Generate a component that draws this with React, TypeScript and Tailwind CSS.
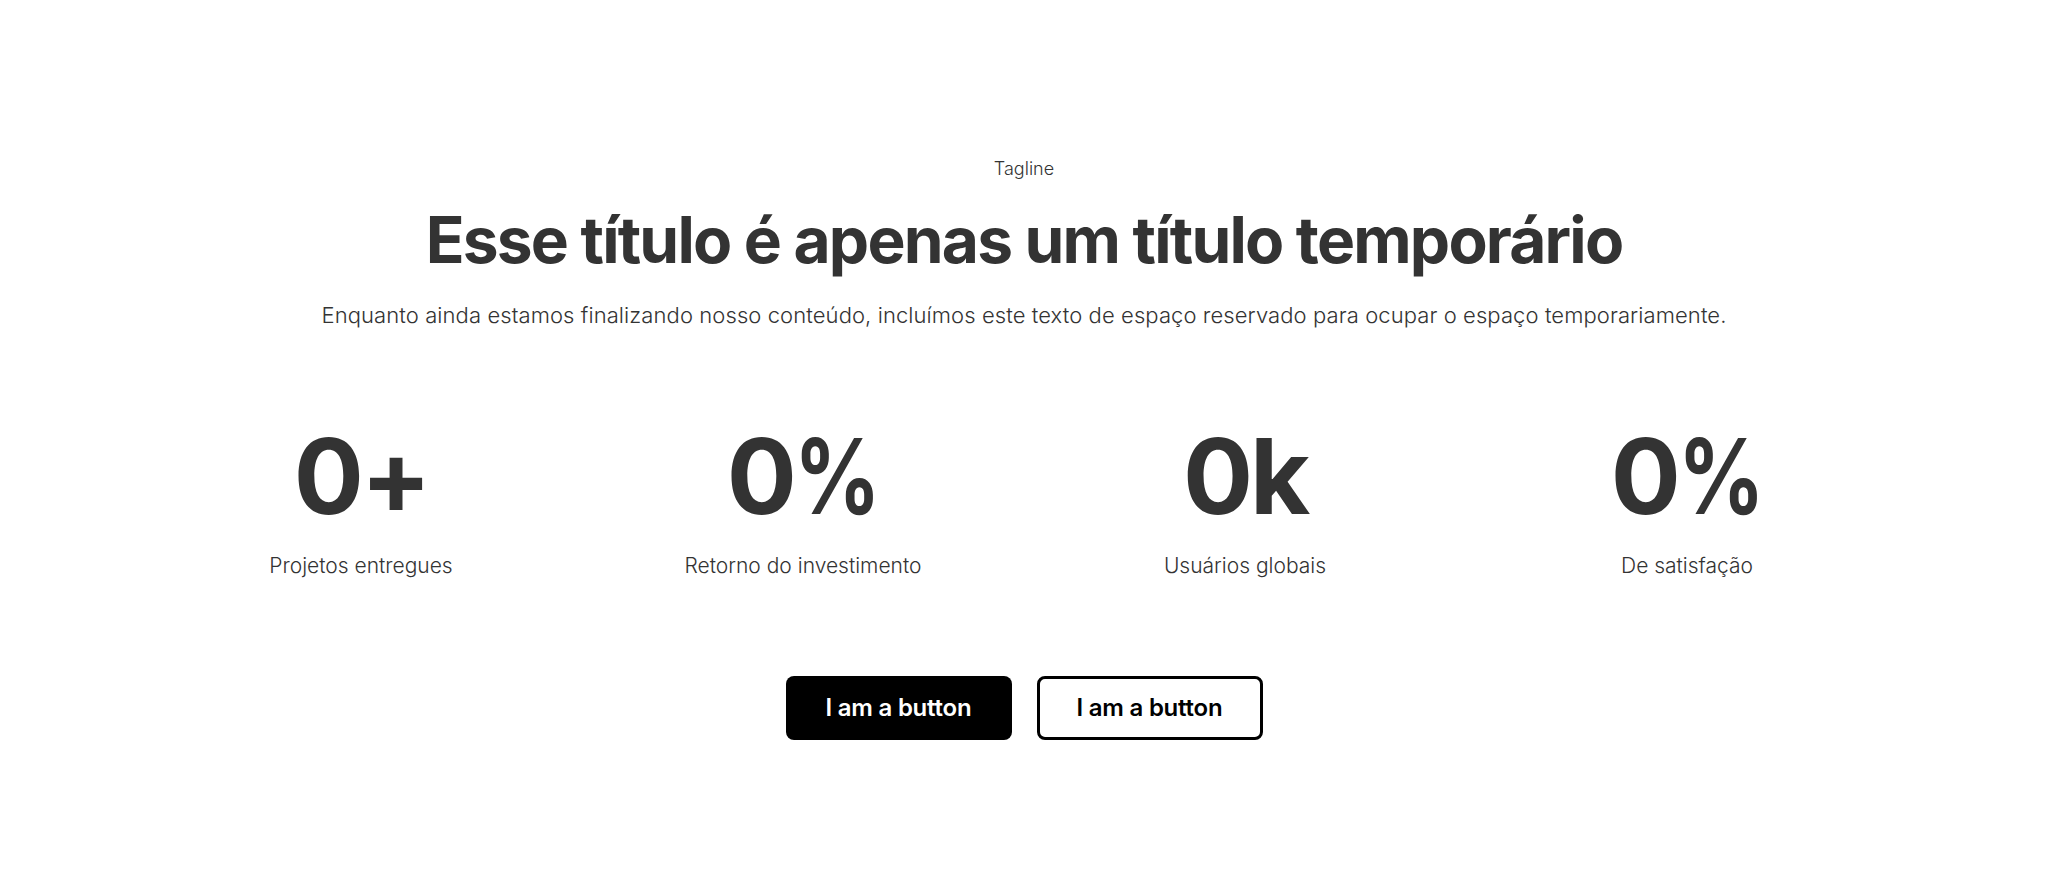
function StatValue({ v }: { v: string }) {
  if (v.endsWith("%")) {
    return (
      <>
        {v.slice(0, -1)}
        <span className="inline-block origin-left scale-x-[0.82] mr-[-17px]">%</span>
      </>
    );
  }
  return <>{v}</>;
}

export default function App() {
  const stats = [
    { v: "0+", l: "Projetos entregues" },
    { v: "0%", l: "Retorno do investimento" },
    { v: "0k", l: "Usuários globais" },
    { v: "0%", l: "De satisfação" },
  ];
  return (
    <div
      className="w-full min-h-[892px] bg-white text-[#333333] flex flex-col items-center"
      style={{ fontFamily: "Inter, 'Noto Sans', sans-serif" }}
    >
      <div className="pt-[156px] flex flex-col items-center">
        <p className="text-[18px] leading-[26px] font-light">Tagline</p>
        <h1 className="mt-[22px] text-[64px] leading-[72px] font-bold tracking-[-0.028em]">
          Esse título é apenas um título temporário
        </h1>
        <p className="mt-[23px] text-[22px] leading-[32px] font-light tracking-[0.004em]">
          Enquanto ainda estamos finalizando nosso conteúdo, incluímos este texto de espaço reservado para ocupar o espaço temporariamente.
        </p>
      </div>
      <div className="mt-[85px] w-[1768px] grid grid-cols-4">
        {stats.map((s, i) => (
          <div key={i} className="flex flex-col items-center">
            <div className="text-[104px] leading-[120px] font-bold tracking-[-0.03em]">
              <StatValue v={s.v} />
            </div>
            <div className="mt-[14px] text-[21px] leading-[32px] font-light">{s.l}</div>
          </div>
        ))}
      </div>
      <div className="mt-[94px] flex gap-[25px]">
        <button className="w-[226px] h-[64px] rounded-[8px] bg-black text-white text-[24px] font-semibold tracking-[-0.01em]">
          I am a button
        </button>
        <button className="w-[226px] h-[64px] rounded-[8px] bg-white text-black border-[3px] border-black text-[24px] font-semibold tracking-[-0.01em]">
          I am a button
        </button>
      </div>
    </div>
  );
}
